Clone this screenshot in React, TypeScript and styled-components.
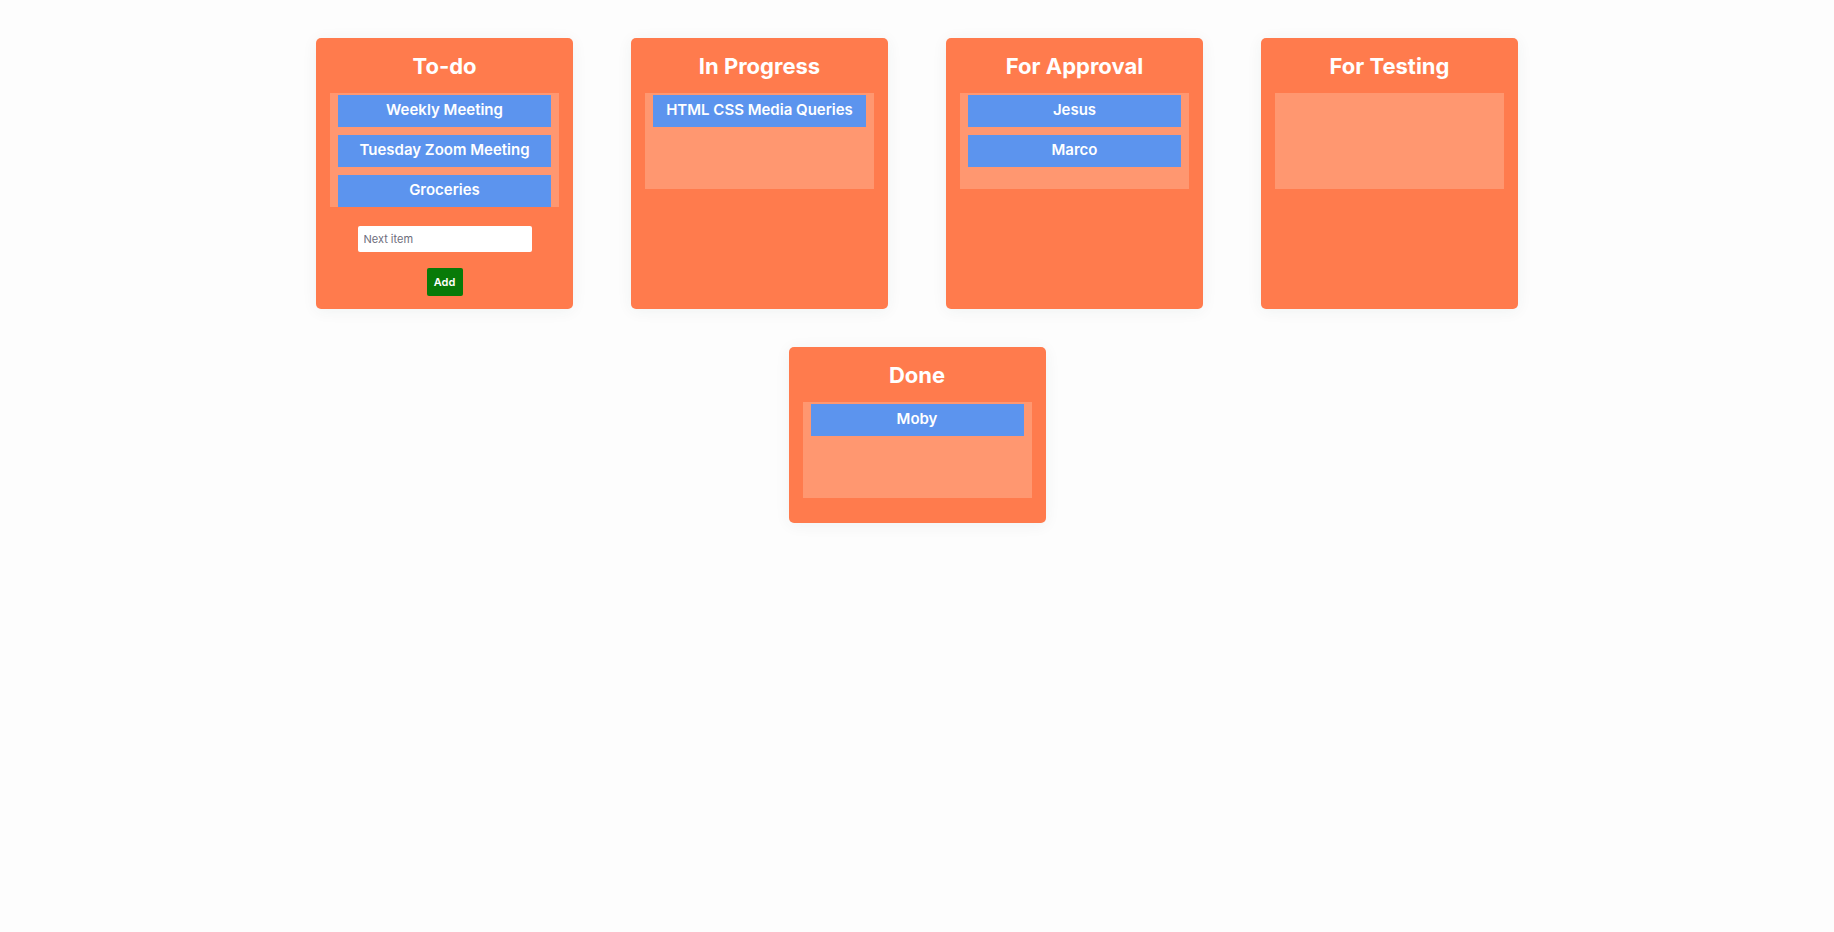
import React, { useState } from "react";
import styled, { createGlobalStyle } from "styled-components";

const GlobalStyle = createGlobalStyle`
  *, *::before, *::after { box-sizing: border-box; }
  body {
    margin: 0;
    background: #fdfdfd;
    font-family: Inter, "Liberation Sans", sans-serif;
  }
`;

const Board = styled.main`
  width: 80%;
  margin: 0 auto;
  padding: 38px 0;
  display: flex;
  flex-wrap: wrap;
  justify-content: center;
  gap: 38px 58px;
`;

const Column = styled.section`
  width: 257px;
  padding: 14px 14px 13px;
  display: flex;
  flex-direction: column;
  border-radius: 5px;
  background: #ff7b4d;
  box-shadow: 0 2px 16px rgba(0, 60, 60, 0.06);
`;

const Title = styled.h2`
  margin: 0 0 13px;
  color: #fff;
  font-size: 22px;
  font-weight: 700;
  line-height: 28px;
  text-align: center;
`;

const CardList = styled.ul`
  min-height: 96px;
  margin: 0 0 12px;
  padding: 2px 8px 0;
  display: flex;
  flex-direction: column;
  gap: 8px;
  list-style: none;
  background: #ff9770;
`;

const Card = styled.li`
  padding-bottom: 2px;
  color: #fff;
  background: #5c94ee;
  font-size: 15px;
  font-weight: 600;
  line-height: 30px;
  text-align: center;
  white-space: nowrap;
`;

const AddForm = styled.form`
  margin-top: 7px;
  display: flex;
  flex-direction: column;
  align-items: center;
  gap: 16px;
`;

const ItemInput = styled.input`
  width: 174px;
  height: 26px;
  padding: 0 6px;
  border: 0;
  border-radius: 2px;
  color: #222;
  background: #fff;
  font: 11px Inter, sans-serif;

  &::placeholder { color: #6d6d7c; opacity: 1; }
`;

const AddButton = styled.button`
  width: 36px;
  height: 28px;
  padding: 0;
  border: 0;
  border-radius: 2px;
  color: #fff;
  background: #087a08;
  font: 600 11px Inter, sans-serif;
  cursor: pointer;
`;

type ColumnData = { title: string; cards: string[]; canAdd?: boolean };

const initialColumns: ColumnData[] = [
  { title: "To-do", cards: ["Weekly Meeting", "Tuesday Zoom Meeting", "Groceries"], canAdd: true },
  { title: "In Progress", cards: ["HTML CSS Media Queries"] },
  { title: "For Approval", cards: ["Jesus", "Marco"] },
  { title: "For Testing", cards: [] },
  { title: "Done", cards: ["Moby"] },
];

export default function App() {
  const [columns, setColumns] = useState(initialColumns);
  const [draft, setDraft] = useState("");

  const addCard = (event: React.FormEvent) => {
    event.preventDefault();
    const text = draft.trim();
    if (!text) return;
    setColumns(columns.map((c) => (c.canAdd ? { ...c, cards: [...c.cards, text] } : c)));
    setDraft("");
  };

  return (
    <>
      <GlobalStyle />
      <Board>
        {columns.map((column) => (
          <Column key={column.title}>
            <Title>{column.title}</Title>
            <CardList>
              {column.cards.map((card, i) => (
                <Card key={i}>{card}</Card>
              ))}
            </CardList>
            {column.canAdd && (
              <AddForm onSubmit={addCard}>
                <ItemInput
                  aria-label="Next item"
                  placeholder="Next item"
                  value={draft}
                  onChange={(e) => setDraft(e.target.value)}
                />
                <AddButton type="submit">Add</AddButton>
              </AddForm>
            )}
          </Column>
        ))}
      </Board>
    </>
  );
}
